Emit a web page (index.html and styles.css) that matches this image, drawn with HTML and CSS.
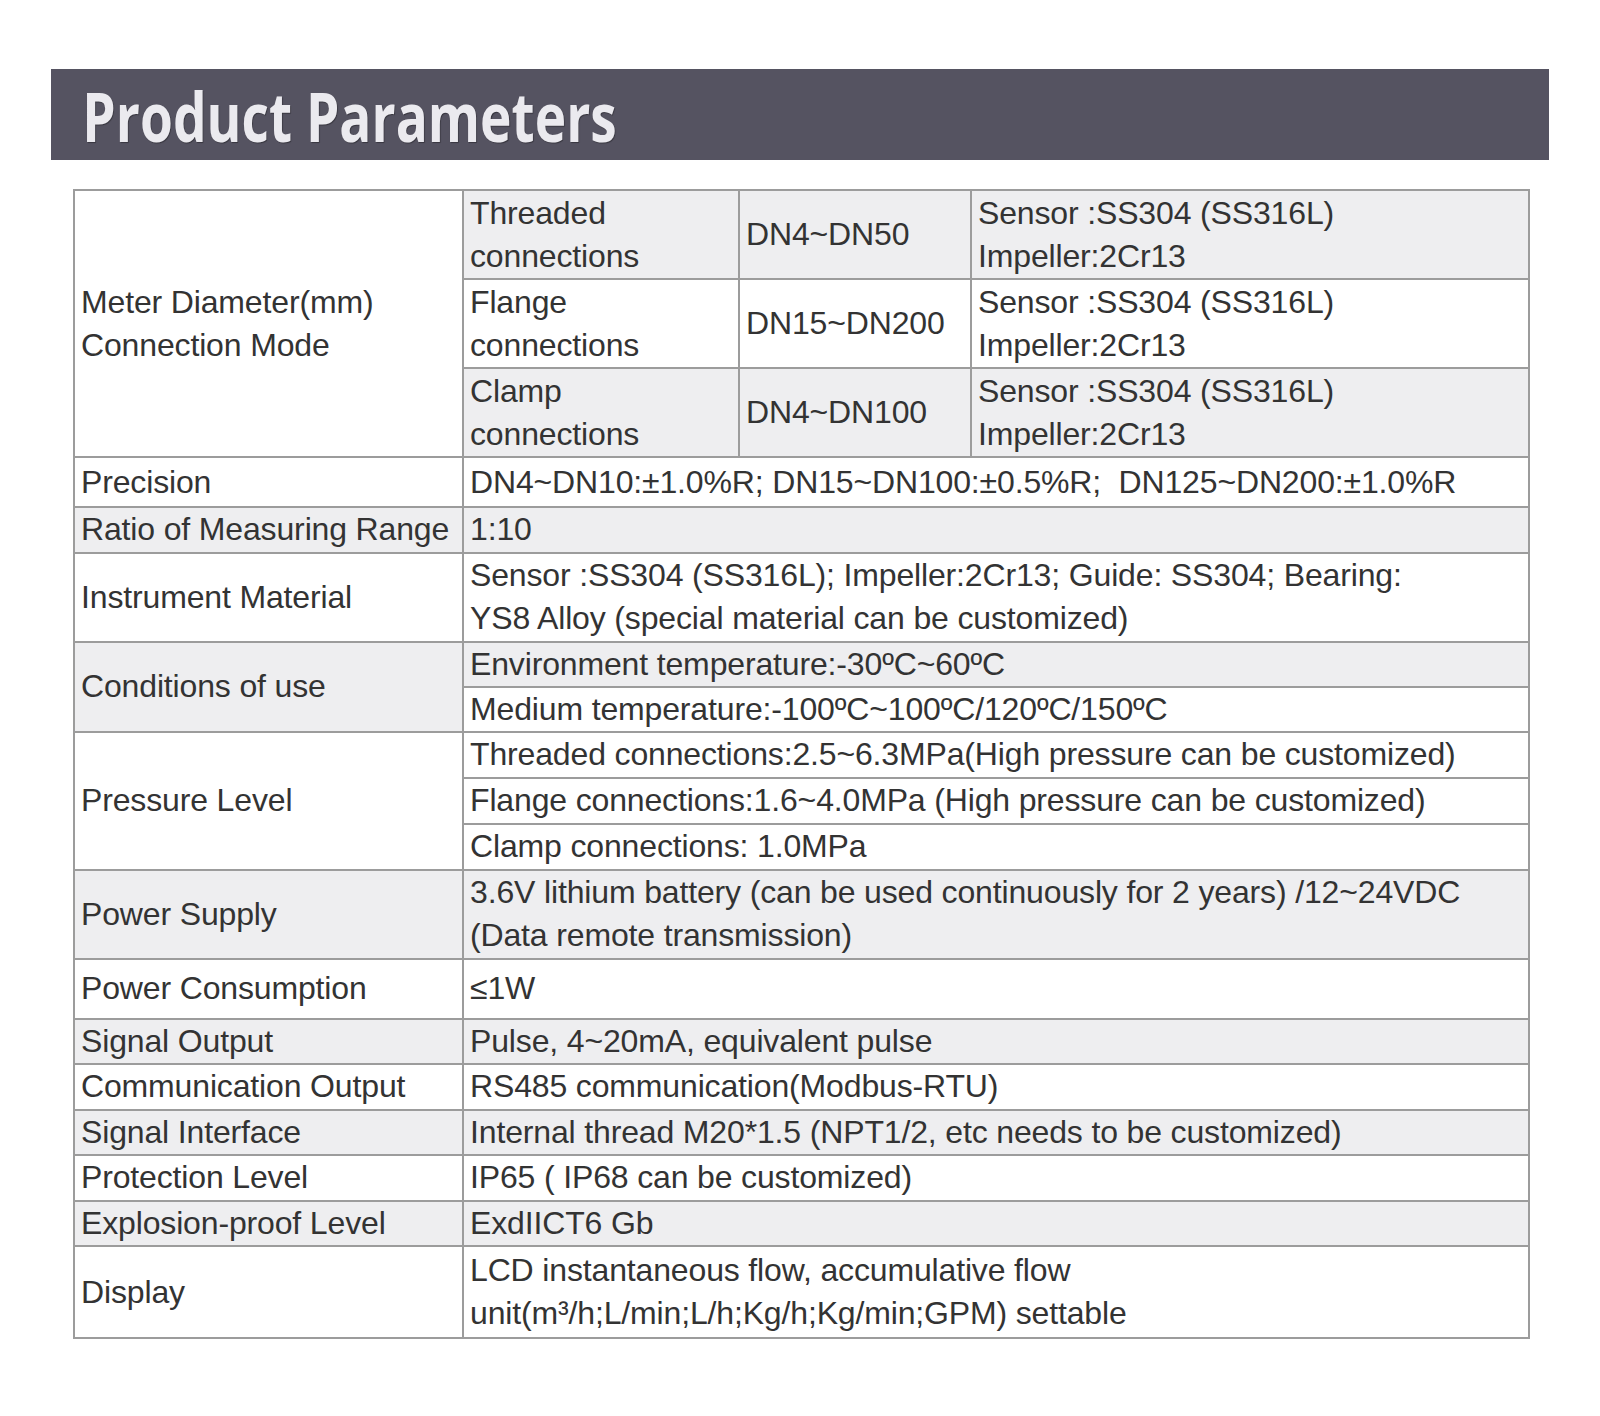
FILE: index.html
```html
<!DOCTYPE html>
<html lang="en">
<head>
<meta charset="utf-8">
<title>Product Parameters</title>
<link rel="stylesheet" href="styles.css">
</head>
<body>
<div class="page">
  <header class="banner">
    <h1 class="banner-title">Product Parameters</h1>
  </header>
  <table class="params">
    <colgroup>
      <col class="c1"><col class="c2"><col class="c3"><col class="c4">
    </colgroup>
    <tbody>
      <tr class="h-double">
        <td rowspan="3">Meter Diameter(mm)<br>Connection Mode</td>
        <td class="gray">Threaded<br>connections</td>
        <td class="gray">DN4~DN50</td>
        <td class="gray">Sensor :SS304 (SS316L)<br>Impeller:2Cr13</td>
      </tr>
      <tr class="h-double">
        <td>Flange<br>connections</td>
        <td>DN15~DN200</td>
        <td>Sensor :SS304 (SS316L)<br>Impeller:2Cr13</td>
      </tr>
      <tr class="h-double">
        <td class="gray">Clamp<br>connections</td>
        <td class="gray">DN4~DN100</td>
        <td class="gray">Sensor :SS304 (SS316L)<br>Impeller:2Cr13</td>
      </tr>
      <tr class="h-precision">
        <td>Precision</td>
        <td colspan="3">DN4~DN10:±1.0%R; DN15~DN100:±0.5%R; &nbsp;DN125~DN200:±1.0%R</td>
      </tr>
      <tr class="h-single gray">
        <td>Ratio of Measuring Range</td>
        <td colspan="3">1:10</td>
      </tr>
      <tr class="h-double">
        <td>Instrument Material</td>
        <td colspan="3">Sensor :SS304 (SS316L); Impeller:2Cr13; Guide: SS304; Bearing:<br>YS8 Alloy (special material can be customized)</td>
      </tr>
      <tr class="h-cond">
        <td rowspan="2" class="gray">Conditions of use</td>
        <td colspan="3" class="gray">Environment temperature:-30ºC~60ºC</td>
      </tr>
      <tr class="h-cond">
        <td colspan="3">Medium temperature:-100ºC~100ºC/120ºC/150ºC</td>
      </tr>
      <tr class="h-press">
        <td rowspan="3">Pressure Level</td>
        <td colspan="3">Threaded connections:2.5~6.3MPa(High pressure can be customized)</td>
      </tr>
      <tr class="h-press">
        <td colspan="3">Flange connections:1.6~4.0MPa (High pressure can be customized)</td>
      </tr>
      <tr class="h-press">
        <td colspan="3">Clamp connections: 1.0MPa</td>
      </tr>
      <tr class="h-double gray">
        <td>Power Supply</td>
        <td colspan="3">3.6V lithium battery (can be used continuously for 2 years) /12~24VDC<br>(Data remote transmission)</td>
      </tr>
      <tr class="h-wide">
        <td>Power Consumption</td>
        <td colspan="3">≤1W</td>
      </tr>
      <tr class="h-single gray">
        <td>Signal Output</td>
        <td colspan="3">Pulse, 4~20mA, equivalent pulse</td>
      </tr>
      <tr class="h-single">
        <td>Communication Output</td>
        <td colspan="3">RS485 communication(Modbus-RTU)</td>
      </tr>
      <tr class="h-single gray">
        <td>Signal Interface</td>
        <td colspan="3">Internal thread M20*1.5 (NPT1/2, etc needs to be customized)</td>
      </tr>
      <tr class="h-single">
        <td>Protection Level</td>
        <td colspan="3">IP65 ( IP68 can be customized)</td>
      </tr>
      <tr class="h-single gray">
        <td>Explosion-proof Level</td>
        <td colspan="3">ExdIICT6 Gb</td>
      </tr>
      <tr class="h-display">
        <td>Display</td>
        <td colspan="3">LCD instantaneous flow, accumulative flow<br>unit(m³/h;L/min;L/h;Kg/h;Kg/min;GPM) settable</td>
      </tr>
    </tbody>
  </table>
</div>
</body>
</html>
```

FILE: styles.css
```css
html, body {
  margin: 0;
  padding: 0;
  background: #ffffff;
}

.page {
  width: 1600px;
  padding: 69px 51px 60px 51px;
  box-sizing: border-box;
}

.banner {
  height: 91px;
  background: #555361;
}

.banner-title {
  display: inline-block;
  margin: 0;
  padding: 3px 0 0 40px;
  font-family: "Open Sans", "Liberation Sans", sans-serif;
  font-weight: 700;
  font-size: 68px;
  line-height: 87px;
  color: #ebeaef;
  text-shadow: 1px 1px 1px rgba(0, 0, 0, 0.35);
  white-space: nowrap;
  transform: scaleX(0.783);
  transform-origin: left center;
}

.params {
  margin: 29px 0 0 22px;
  width: 1455px;
  table-layout: fixed;
  border-collapse: collapse;
  font-family: "Liberation Sans", Arial, sans-serif;
  font-size: 32px;
  letter-spacing: -0.15px;
  line-height: 43px;
  color: #333333;
}

.c1 { width: 389px; }
.c2 { width: 276px; }
.c3 { width: 232px; }
.c4 { width: 558px; }

.params td {
  border: 2px solid #9c9c9c;
  padding: 0 6px;
  vertical-align: middle;
  white-space: nowrap;
  overflow: hidden;
}

.gray,
.params td.gray {
  background: #eeeef0;
}

.h-double { height: 89px; }
.h-single { height: 45.5px; }
.h-press { height: 46px; }
.h-cond { height: 45px; }
.h-precision { height: 50px; }
.h-wide { height: 60px; }
.h-display { height: 92px; }
```
